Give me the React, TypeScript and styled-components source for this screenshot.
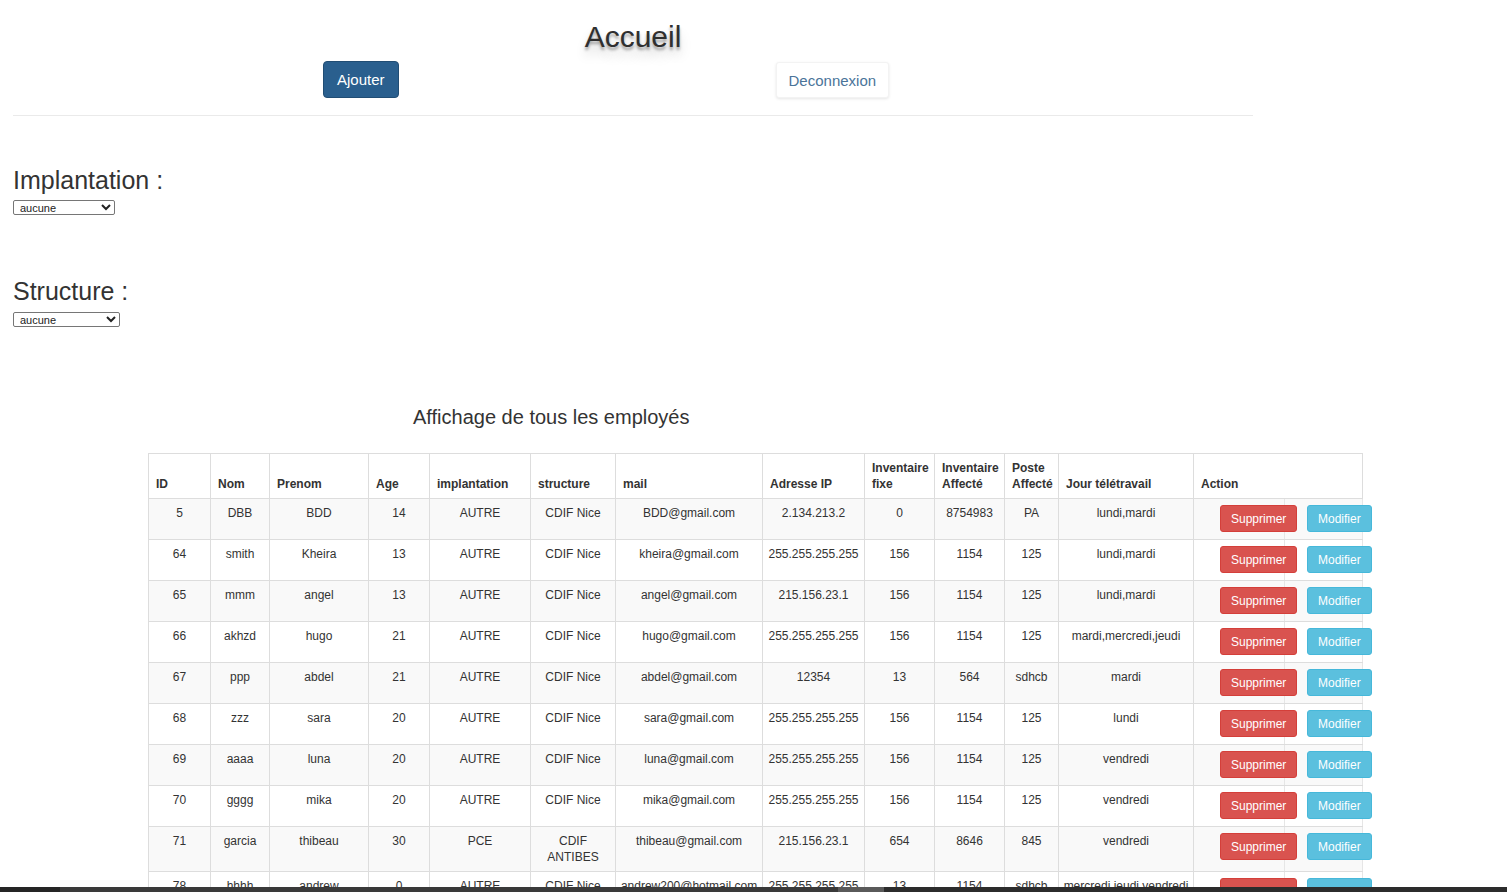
import React from "react";
import styled, { createGlobalStyle } from "styled-components";

const Global = createGlobalStyle`
  html, body { margin: 0; padding: 0; background: #fff; overflow: hidden; }
  body { font-family: "Liberation Sans", Arial, sans-serif; color: #333; }
`;

const Page = styled.div`
  height: 892px;
  overflow: hidden;
  position: relative;
`;

const Top = styled.header`
  width: 1240px;
  margin-left: 13px;
  padding-top: 20px;
`;

const Title = styled.h1`
  margin: 0;
  text-align: center;
  font-size: 30px;
  line-height: 34px;
  font-weight: 400;
  color: #2f2f2f;
  text-shadow: 0 3px 3px rgba(0, 0, 0, 0.35), 0 9px 12px rgba(0, 0, 0, 0.18);
`;

const ButtonRow = styled.div`
  display: flex;
  align-items: flex-start;
  margin-top: 7px;
  padding-left: 310px;
  gap: 377px;
`;

const PrimaryButton = styled.button`
  height: 37px;
  padding: 0 13px;
  font-family: "Liberation Sans", Arial, sans-serif;
  font-size: 15px;
  color: #fff;
  background: #2a5f8e;
  border: 1px solid #214d74;
  border-radius: 4px;
`;

const LinkButton = styled.button`
  margin-top: 1px;
  height: 36px;
  padding: 0 12px;
  font-family: "Liberation Sans", Arial, sans-serif;
  font-size: 15px;
  color: #4a7499;
  background: #fff;
  border: 1px solid #f3f3f3;
  border-radius: 3px;
  box-shadow: 0 1px 3px rgba(0, 0, 0, 0.1);
`;

const Rule = styled.hr`
  margin: 17px 0 0;
  border: 0;
  border-top: 1px solid #eaeaea;
`;

const Filters = styled.section`
  padding-left: 13px;
`;

const FilterBlock = styled.div<{ $top: number }>`
  margin-top: ${(p) => p.$top}px;
`;

const FilterLabel = styled.h2<{ $gap: number }>`
  margin: 0 0 ${(p) => p.$gap}px;
  font-size: 25px;
  line-height: 28px;
  font-weight: 400;
  color: #333;
`;

const Select = styled.select<{ $w: number }>`
  display: block;
  width: ${(p) => p.$w}px;
  height: 15px;
  padding: 0 0 0 2px;
  font-family: "Liberation Sans", Arial, sans-serif;
  font-size: 11px;
  line-height: 13px;
  color: #222;
  background: #fff;
  border: 1px solid #767676;
  border-radius: 2px;
`;

const SectionTitle = styled.h3`
  margin: 78px 0 0 413px;
  font-size: 20px;
  line-height: 24px;
  font-weight: 400;
  color: #333;
`;

const Table = styled.table`
  margin: 24px 0 0 148px;
  width: 1214px;
  table-layout: fixed;
  border-collapse: collapse;
  font-size: 12px;
  line-height: 16px;
`;

const Th = styled.th`
  padding: 6px 7px;
  text-align: left;
  vertical-align: bottom;
  font-weight: 700;
  color: #333;
  border: 1px solid #ddd;
`;

const Tr = styled.tr`
  &:nth-child(odd) { background: #f9f9f9; }
`;

const Td = styled.td`
  padding: 6px 4px;
  text-align: center;
  vertical-align: top;
  color: #333;
  border: 1px solid #ddd;
`;

const ActionTd = styled.td<{ $indent: number }>`
  padding: 6px 0 7px ${(p) => p.$indent}px;
  vertical-align: top;
  white-space: nowrap;
  border: 1px solid #ddd;
  border-right-color: #e6e6e6;
`;

const ActionButton = styled.button<{ $kind: "danger" | "info" }>`
  position: relative;
  height: 27px;
  padding: 0 10px;
  font-family: "Liberation Sans", Arial, sans-serif;
  font-size: 12px;
  color: #fff;
  border-radius: 3px;
  background: ${(p) => (p.$kind === "danger" ? "#d9534f" : "#5bc0de")};
  border: 1px solid ${(p) => (p.$kind === "danger" ? "#d43f3a" : "#46b8da")};
`;

const ScrollStrip = styled.div`
  position: fixed;
  left: 0;
  right: 0;
  bottom: 0;
  height: 5px;
  background: linear-gradient(
    to right,
    #252525 0,
    #252525 60px,
    #3a3a3a 60px,
    #3a3a3a 838px,
    #5a5a5a 838px,
    #5a5a5a 884px,
    #2c2c2c 884px
  );
`;

const cols = [62, 59, 99, 61, 101, 85, 147, 102, 70, 70, 54, 135, 91, 78];

const headers = [
  "ID",
  "Nom",
  "Prenom",
  "Age",
  "implantation",
  "structure",
  "mail",
  "Adresse IP",
  "Inventaire fixe",
  "Inventaire Affecté",
  "Poste Affecté",
  "Jour télétravail",
];

const rows: string[][] = [
  ["5", "DBB", "BDD", "14", "AUTRE", "CDIF Nice", "BDD@gmail.com", "2.134.213.2", "0", "8754983", "PA", "lundi,mardi"],
  ["64", "smith", "Kheira", "13", "AUTRE", "CDIF Nice", "kheira@gmail.com", "255.255.255.255", "156", "1154", "125", "lundi,mardi"],
  ["65", "mmm", "angel", "13", "AUTRE", "CDIF Nice", "angel@gmail.com", "215.156.23.1", "156", "1154", "125", "lundi,mardi"],
  ["66", "akhzd", "hugo", "21", "AUTRE", "CDIF Nice", "hugo@gmail.com", "255.255.255.255", "156", "1154", "125", "mardi,mercredi,jeudi"],
  ["67", "ppp", "abdel", "21", "AUTRE", "CDIF Nice", "abdel@gmail.com", "12354", "13", "564", "sdhcb", "mardi"],
  ["68", "zzz", "sara", "20", "AUTRE", "CDIF Nice", "sara@gmail.com", "255.255.255.255", "156", "1154", "125", "lundi"],
  ["69", "aaaa", "luna", "20", "AUTRE", "CDIF Nice", "luna@gmail.com", "255.255.255.255", "156", "1154", "125", "vendredi"],
  ["70", "gggg", "mika", "20", "AUTRE", "CDIF Nice", "mika@gmail.com", "255.255.255.255", "156", "1154", "125", "vendredi"],
  ["71", "garcia", "thibeau", "30", "PCE", "CDIF ANTIBES", "thibeau@gmail.com", "215.156.23.1", "654", "8646", "845", "vendredi"],
  ["78", "hhhh", "andrew", "0", "AUTRE", "CDIF Nice", "andrew200@hotmail.com", "255.255.255.255", "13", "1154", "sdhcb", "mercredi,jeudi,vendredi"],
];

export default function App() {
  return (
    <Page>
      <Global />
      <Top>
        <Title>Accueil</Title>
        <ButtonRow>
          <PrimaryButton>Ajouter</PrimaryButton>
          <LinkButton>Deconnexion</LinkButton>
        </ButtonRow>
        <Rule />
      </Top>
      <Filters>
        <FilterBlock $top={50}>
          <FilterLabel $gap={6}>Implantation :</FilterLabel>
          <Select $w={102} defaultValue="aucune">
            <option value="aucune">aucune</option>
          </Select>
        </FilterBlock>
        <FilterBlock $top={62}>
          <FilterLabel $gap={7}>Structure :</FilterLabel>
          <Select $w={107} defaultValue="aucune">
            <option value="aucune">aucune</option>
          </Select>
        </FilterBlock>
      </Filters>
      <SectionTitle>Affichage de tous les employés</SectionTitle>
      <Table>
        <colgroup>
          {cols.map((w, i) => (
            <col key={i} style={{ width: w }} />
          ))}
        </colgroup>
        <thead>
          <tr>
            {headers.map((h) => (
              <Th key={h}>{h}</Th>
            ))}
            <Th colSpan={2}>Action</Th>
          </tr>
        </thead>
        <tbody>
          {rows.map((r) => (
            <Tr key={r[0]}>
              {r.map((c, i) => (
                <Td key={i}>{c}</Td>
              ))}
              <ActionTd $indent={26}>
                <ActionButton $kind="danger">Supprimer</ActionButton>
              </ActionTd>
              <ActionTd $indent={22}>
                <ActionButton $kind="info">Modifier</ActionButton>
              </ActionTd>
            </Tr>
          ))}
        </tbody>
      </Table>
      <ScrollStrip />
    </Page>
  );
}
